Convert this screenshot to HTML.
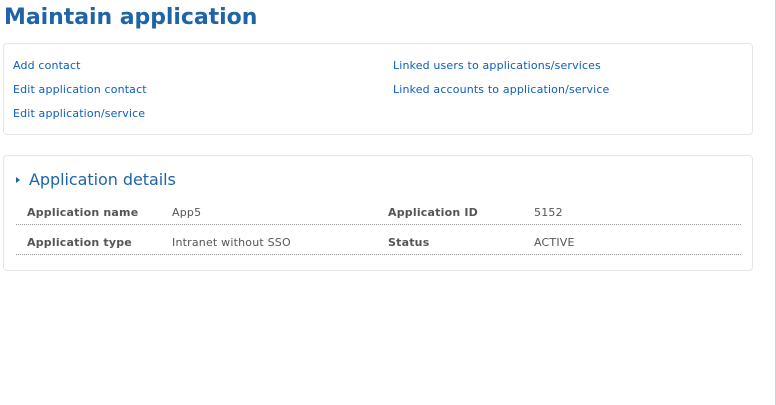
<!DOCTYPE html><html><head><style>
body{margin:0;width:776px;height:405px;background:#fff;font-family:"DejaVu Sans","Liberation Sans",sans-serif;position:relative;overflow:hidden}
.t{position:absolute;left:4px;top:5px;font-size:22px;font-weight:bold;color:#1f63a8;margin:0;white-space:nowrap;letter-spacing:-0.05px}
.box{position:absolute;left:3px;width:748px;border:1px solid #e6e6e6;border-radius:4px}
a{position:absolute;font-size:11px;color:#0a5ec0;text-decoration:none;white-space:nowrap;letter-spacing:0.15px}
.s{position:absolute;font-size:11px;white-space:nowrap;color:#555;letter-spacing:0.2px}
.b{font-weight:bold}
.dl{position:absolute;left:16px;width:725px;border-top:1px dotted #999}
.vr{position:absolute;left:775px;top:0;width:1px;height:405px;background:#c9d2dc}
</style></head><body>
<h1 class="t">Maintain application</h1>
<div class="box" style="top:43px;height:90px"></div>
<a style="left:13px;top:59px">Add contact</a>
<a style="left:13px;top:83px">Edit application contact</a>
<a style="left:13px;top:107px">Edit application/service</a>
<a style="left:393px;top:59px">Linked users to applications/services</a>
<a style="left:393px;top:83px">Linked accounts to application/service</a>
<div class="box" style="top:155px;height:114px"></div>
<div style="position:absolute;left:16px;top:177px;width:0;height:0;border-left:4px solid #1f63a8;border-top:3.5px solid transparent;border-bottom:3.5px solid transparent"></div>
<div style="position:absolute;left:29px;top:170px;font-size:16px;color:#1f63a8;white-space:nowrap;letter-spacing:-0.05px">Application details</div>
<div class="s b" style="left:27px;top:206px">Application name</div>
<div class="s" style="left:172px;top:206px">App5</div>
<div class="s b" style="left:388px;top:206px">Application ID</div>
<div class="s" style="left:534px;top:206px">5152</div>
<div class="dl" style="top:224px"></div>
<div class="s b" style="left:27px;top:236px">Application type</div>
<div class="s" style="left:172px;top:236px">Intranet without SSO</div>
<div class="s b" style="left:388px;top:236px">Status</div>
<div class="s" style="left:534px;top:236px">ACTIVE</div>
<div class="dl" style="top:254px"></div>
<div class="vr"></div>
</body></html>
